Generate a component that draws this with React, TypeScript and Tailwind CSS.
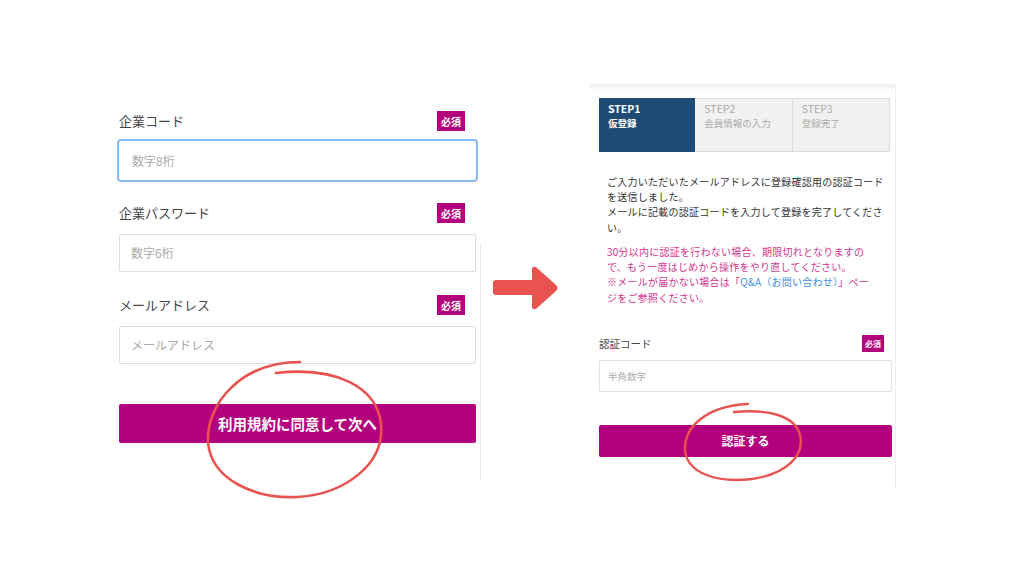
const jp = { fontFamily: '"Noto Sans CJK JP", "Noto Sans", sans-serif' };

function Badge({ small }: { small?: boolean }) {
  return (
    <span
      className={
        small
          ? "flex h-[17px] w-[22px] items-center justify-center bg-[#b3007d] text-[8px] font-bold text-white"
          : "flex h-[20px] w-[28px] items-center justify-center bg-[#b3007d] text-[10px] font-bold text-white"
      }
    >
      必須
    </span>
  );
}

function Field({
  label,
  placeholder,
  focused,
}: {
  label: string;
  placeholder: string;
  focused?: boolean;
}) {
  return (
    <div className="flex flex-col">
      <div className="flex items-center justify-between pr-[11px]">
        <span className="text-[13px] text-[#444]">{label}</span>
        <Badge />
      </div>
      <div
        className={
          focused
            ? "mt-[8px] -mx-[2px] flex h-[43px] items-center rounded-[4px] border-[2px] border-[#86bdf8] pl-[13px] text-[12px] text-[#aaa]"
            : "mt-[11px] flex h-[38px] items-center rounded-[2px] border border-[#dddddd] pl-[11px] text-[12px] text-[#aaa]"
        }
      >
        {placeholder}
      </div>
    </div>
  );
}

function Step({
  num,
  title,
  active,
}: {
  num: string;
  title: string;
  active?: boolean;
}) {
  return (
    <div
      className={
        active
          ? "flex h-full flex-1 flex-col bg-[#1e4b76] pl-[9px] pt-[4px] text-white"
          : "flex h-full flex-1 flex-col border border-l-0 border-[#dcdcdc] bg-[#f1f1f1] pl-[9px] pt-[3px] text-[#aaaaaa]"
      }
    >
      <span className={active ? "text-[10.5px] font-bold leading-[14px]" : "text-[10.5px] leading-[14px]"}>
        {num}
      </span>
      <span className={active ? "text-[9.5px] font-bold leading-[14px]" : "text-[9.5px] leading-[14px]"}>
        {title}
      </span>
    </div>
  );
}

export default function App() {
  return (
    <div className="relative flex h-[576px] w-[1024px] items-start overflow-hidden bg-white" style={jp}>
      {/* left form */}
      <div className="ml-[119px] mt-[111px] flex w-[357px] flex-col">
        <Field label="企業コード" placeholder="数字8桁" focused />
        <div className="mt-[21px]">
          <Field label="企業パスワード" placeholder="数字6桁" />
        </div>
        <div className="mt-[23px]">
          <Field label="メールアドレス" placeholder="メールアドレス" />
        </div>
        <button className="mt-[40px] flex h-[39px] items-center justify-center rounded-[2px] bg-[#b3007d] text-[14.5px] font-bold text-white">
          利用規約に同意して次へ
        </button>
      </div>

      <div className="ml-[4px] mt-[245px] h-[235px] w-px bg-[#e8e8e8]" />

      {/* arrow */}
      <svg className="ml-[11px] mt-[265px]" width="67" height="46" viewBox="0 0 67 46">
        <path
          d="M4 15 H40 V4 Q41 0 45 3 L64 20 Q67 23 64 26 L45 43 Q41 46 40 42 V30 H4 Q1 30 1 27 V18 Q1 15 4 15 Z"
          fill="#e9524f"
        />
      </svg>

      {/* right panel */}
      <div className="ml-[31px] mt-[84px] flex h-[406px] w-[306px] flex-col border-r border-[#efefef]">
        <div className="h-[7px] bg-gradient-to-b from-[#efefef] to-white" />
        <div className="ml-[9px] mt-[7px] flex h-[54px] w-[291px]">
          <Step num="STEP1" title="仮登録" active />
          <Step num="STEP2" title="会員情報の入力" />
          <Step num="STEP3" title="登録完了" />
        </div>
        <p className="ml-[17px] mt-[22px] text-[10px] leading-[15.2px] tracking-[0.25px] text-[#333]">
          ご入力いただいたメールアドレスに登録確認用の認証コード
          <br />
          を送信しました。
          <br />
          メールに記載の認証コードを入力して登録を完了してくださ
          <br />
          い。
        </p>
        <p className="ml-[17px] mt-[9px] text-[10px] leading-[15.3px] tracking-[0.25px] text-[#d4358f]">
          30分以内に認証を行わない場合、期限切れとなりますの
          <br />
          で、もう一度はじめから操作をやり直してください。
          <br />
          ※メールが届かない場合は「<span className="text-[#3d8fe6]">Q&amp;A（お問い合わせ）</span>」ペー
          <br />
          ジをご参照ください。
        </p>
        <div className="ml-[9px] mt-[30px] flex w-[285px] items-center justify-between">
          <span className="text-[10.5px] text-[#444]">認証コード</span>
          <Badge small />
        </div>
        <div className="ml-[9px] mt-[8px] flex h-[32px] w-[293px] items-center rounded-[2px] border border-[#e2e2e2] pl-[8px] text-[9.5px] text-[#aaa]">
          半角数字
        </div>
        <button className="ml-[9px] mt-[33px] flex h-[32px] w-[293px] items-center justify-center rounded-[2px] bg-[#b3007d] text-[12px] font-bold text-white">
          認証する
        </button>
      </div>

      {/* hand-drawn annotation circles */}
      <svg className="pointer-events-none absolute left-0 top-0" width="1024" height="576">
        <path
          d="M300 362 C 240 362 206 405 208 442 C 211 480 255 499 298 497 C 345 494 385 464 381 424 C 377 388 338 366 276 373"
          fill="none"
          stroke="#e8534f"
          strokeWidth="2.6"
          strokeLinecap="round"
        />
        <path
          d="M748 404 C 705 406 684 428 685 450 C 687 474 718 483 752 479 C 787 474 805 455 800 435 C 795 416 770 409 734 412"
          fill="none"
          stroke="#e8534f"
          strokeWidth="2.4"
          strokeLinecap="round"
        />
      </svg>
    </div>
  );
}
